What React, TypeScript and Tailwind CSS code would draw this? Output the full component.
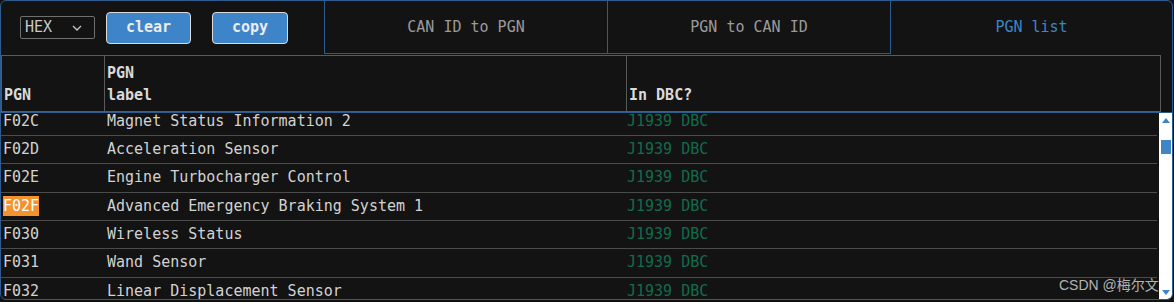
import React from "react";

const rows: { pgn: string; label: string; hl?: boolean }[] = [
  { pgn: "F02C", label: "Magnet Status Information 2" },
  { pgn: "F02D", label: "Acceleration Sensor" },
  { pgn: "F02E", label: "Engine Turbocharger Control" },
  { pgn: "F02F", label: "Advanced Emergency Braking System 1", hl: true },
  { pgn: "F030", label: "Wireless Status" },
  { pgn: "F031", label: "Wand Sensor" },
  { pgn: "F032", label: "Linear Displacement Sensor" },
  { pgn: "F033", label: "Inclinometer Sensor 2" },
];

export default function App() {
  return (
    <div className="w-[1174px] h-[302px] bg-[#111111] font-[family-name:'DejaVu_Sans_Mono',monospace] text-[15px]">
      <div className="relative w-[1173px] h-[300px] border border-[#2d5b8e] rounded-[6px] bg-[#131313] overflow-hidden flex flex-col">
        {/* Top bar */}
        <div className="flex h-[53px] shrink-0">
          <div className="w-[323px] flex items-center pl-[19px]">
            <div className="w-[75px] h-[23px] border border-[#6f6f6f] rounded-[2px] flex items-center justify-between pl-[4px] pr-[12px] text-[#c8c8c8] leading-none">
              <span>HEX</span>
              <svg width="10" height="6" viewBox="0 0 10 6" className="mt-[1px]">
                <polyline points="1,1 5,5 9,1" fill="none" stroke="#c8c8c8" strokeWidth="1.3" />
              </svg>
            </div>
            <button className="ml-[11px] w-[85px] h-[32px] bg-[#3d85c8] border border-[#dcdcdc] rounded-[4px] text-[#ececec] font-bold">
              clear
            </button>
            <button className="ml-[21px] w-[76px] h-[32px] bg-[#3d85c8] border border-[#dcdcdc] rounded-[4px] text-[#ececec] font-bold">
              copy
            </button>
          </div>
          <div className="w-[283px] border-l border-b border-[#2d5b8e] flex items-center justify-center text-[#9b9b9b]">
            CAN ID to PGN
          </div>
          <div className="w-[283px] border-l border-b border-[#2d5b8e] flex items-center justify-center text-[#9b9b9b]">
            PGN to CAN ID
          </div>
          <div className="w-[282px] border-l border-[#2d5b8e] flex items-center justify-center text-[#3d85c6]">
            PGN list
          </div>
        </div>

        {/* Table header */}
        <div className="mt-[1px] w-[1160px] h-[57px] border border-[#5a5a5a] flex shrink-0 font-bold text-[#dadada] leading-[22px]">
          <div className="w-[103px] border-r border-[#5a5a5a] flex items-end pl-[2px] pb-[5px]">PGN</div>
          <div className="w-[522px] border-r border-[#5a5a5a] flex flex-col justify-end pl-[2px] pb-[5px]">
            <span>PGN</span>
            <span>label</span>
          </div>
          <div className="flex-1 flex items-end pl-[2px] pb-[5px]">In DBC?</div>
        </div>
        <div className="h-[1px] bg-[#2d5b8e] shrink-0" />

        {/* Body */}
        <div className="flex flex-1 min-h-0">
          <div className="w-[1158px] overflow-hidden pr-[2px]">
            <div className="-mt-[5.33px]">
              {rows.map((r) => (
                <div
                  key={r.pgn}
                  className="h-[28.33px] border-b border-[#4b4b4b] flex items-center leading-[17px] text-[#d2d2d2]"
                >
                  <div className="w-[104px] pl-[2px]">
                    {r.hl ? (
                      <span className="bg-[#f3922f] text-white py-[1px]">{r.pgn}</span>
                    ) : (
                      r.pgn
                    )}
                  </div>
                  <div className="w-[520px] pl-[2px]">{r.label}</div>
                  <div className="flex-1 pl-[2px] text-[#126b4c]">J1939 DBC</div>
                </div>
              ))}
            </div>
          </div>
          {/* Scrollbar */}
          <div className="w-[13px] bg-white relative">
            <svg width="8" height="5" viewBox="0 0 8 5" className="absolute left-[3px] top-[5px]">
              <polygon points="0,5 4,0 8,5" fill="#3d85c6" />
            </svg>
            <div className="absolute left-[2px] top-[27px] w-[10px] h-[14px] bg-[#3d85c6]" />
            <svg width="8" height="5" viewBox="0 0 8 5" className="absolute left-[3px] top-[177px]">
              <polygon points="0,0 8,0 4,5" fill="#3d85c6" />
            </svg>
          </div>
        </div>

        {/* Watermark */}
        <div className="absolute left-[1058px] top-[275px] text-[14px] text-[#b4b4b4] font-[family-name:'Liberation_Sans','Noto_Sans_CJK_SC',sans-serif] leading-[18px]">
          CSDN @梅尔文
        </div>
      </div>
    </div>
  );
}
